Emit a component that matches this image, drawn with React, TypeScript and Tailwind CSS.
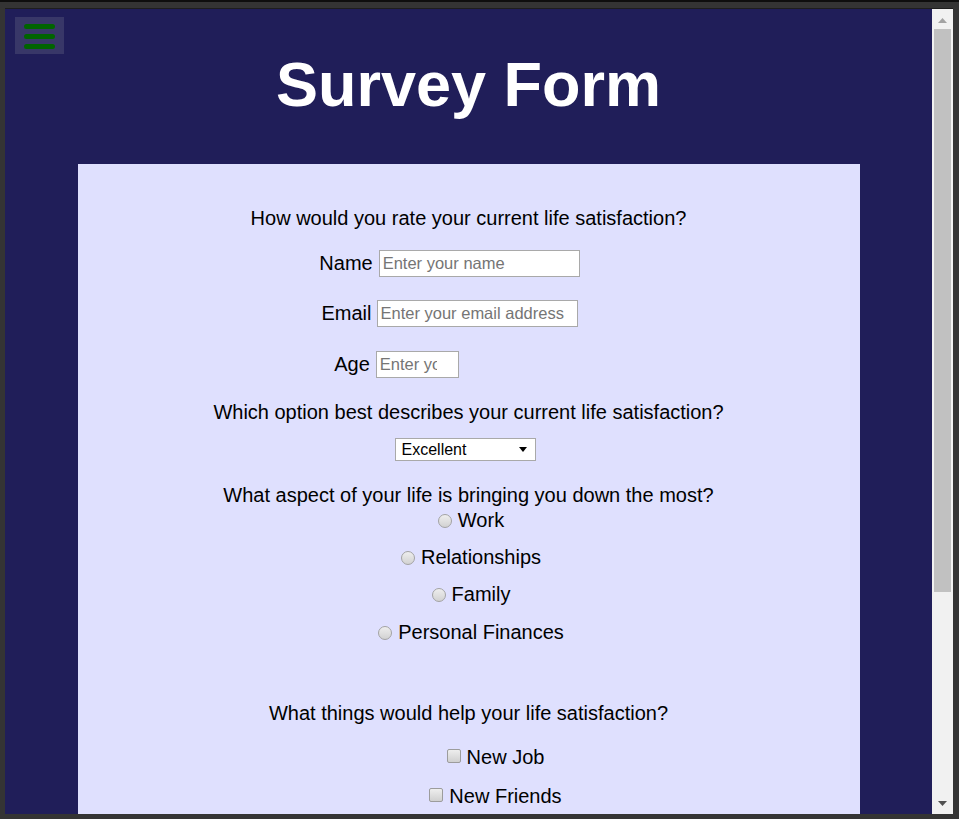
import React from "react";

const font = { fontFamily: '"Liberation Sans", Arial, sans-serif' };

function Radio({ label }: { label: string }) {
  return (
    <label className="flex items-center justify-center pl-[5px] leading-[23px] h-[23px]">
      <input
        type="radio"
        name="aspect"
        className="appearance-none w-[14px] h-[14px] rounded-full border border-[#a3a3a3] bg-linear-to-b from-[#eeeeee] to-[#d2d2d2] mr-[6px] m-0"
      />
      <span>{label}</span>
    </label>
  );
}

function Check({ label }: { label: string }) {
  return (
    <label className="flex items-center justify-center pl-[54px] leading-[23px] h-[23px]">
      <input
        type="checkbox"
        className="appearance-none w-[14px] h-[14px] rounded-[2px] border border-[#9c9c9c] bg-linear-to-b from-[#eeeeee] to-[#d0d0d0] mr-[6px] m-0 -translate-y-[2px]"
      />
      <span>{label}</span>
    </label>
  );
}

const inputCls =
  "h-[27px] border border-[#a9a9a9] bg-white px-[3px] text-[16.5px] placeholder:text-[#757575] outline-none";

export default function App() {
  return (
    <div
      className="w-[959px] h-[819px] bg-[#343434] border-t-[2px] border-[#0e0e0e] pt-[6px] pl-[5px] pr-[6px] pb-[5px] overflow-hidden"
      style={font}
    >
      <div className="flex h-full border-t border-[#1e1e1e]">
        {/* Page content */}
        <div className="relative flex-1 bg-[#201e59] overflow-hidden">
          <button className="absolute left-[10px] top-[8px] w-[49px] h-[37px] bg-[#383768] flex flex-col gap-[5px] pt-[7px] pl-[9px]">
            <span className="block w-[31px] h-[5px] rounded-full bg-[#006400]" />
            <span className="block w-[31px] h-[5px] rounded-full bg-[#006400]" />
            <span className="block w-[31px] h-[5px] rounded-full bg-[#006400]" />
          </button>

          <h1 className="mt-[44px] text-center text-white font-bold text-[63px] leading-[63px]">
            Survey Form
          </h1>

          <form className="mx-auto mt-[48px] w-[782px] bg-[#dfe0fe] pt-[43px] pb-[80px] text-black text-[20px] flex flex-col">
            <p className="text-center leading-[23px]">
              How would you rate your current life satisfaction?
            </p>

            <div className="mt-[20px] flex items-center justify-center pr-[38px] gap-[6px]">
              <label htmlFor="name" className="leading-[23px]">Name</label>
              <input
                id="name"
                type="text"
                placeholder="Enter your name"
                className={"w-[201px] " + inputCls}
              />
            </div>

            <div className="mt-[23px] flex items-center justify-center pr-[38px] gap-[5px]">
              <label htmlFor="email" className="leading-[23px]">Email</label>
              <input
                id="email"
                type="email"
                placeholder="Enter your email address"
                className={"w-[201px] " + inputCls}
              />
            </div>

            <div className="mt-[24px] flex items-center justify-center pr-[144px] gap-[6px]">
              <label htmlFor="age" className="leading-[23px]">Age</label>
              <input
                id="age"
                type="text"
                placeholder="Enter your age"
                className="w-[83px] h-[27px] border border-[#a9a9a9] bg-white pl-[3px] pr-[21px] text-[16.5px] placeholder:text-[#757575] outline-none"
              />
            </div>

            <p className="mt-[23px] text-center leading-[23px]">
              Which option best describes your current life satisfaction?
            </p>

            <div className="mt-[14px] flex justify-center pr-[7px]">
              <div className="relative w-[141px] h-[23px]">
                <select className="block appearance-none w-full h-full border border-[#a9a9a9] bg-white pl-[6px] text-[16px] leading-[21px] outline-none rounded-none">
                  <option>Excellent</option>
                  <option>Good</option>
                  <option>Average</option>
                  <option>Poor</option>
                </select>
                <svg
                  className="absolute right-[9px] top-[9px] pointer-events-none"
                  width="8"
                  height="5"
                  viewBox="0 0 8 5"
                >
                  <polygon points="0,0 8,0 4,5" fill="#000" />
                </svg>
              </div>
            </div>

            <p className="mt-[23px] text-center leading-[23px]">
              What aspect of your life is bringing you down the most?
            </p>
            <div className="mt-[2px]">
              <Radio label="Work" />
            </div>
            <div className="mt-[14px]">
              <Radio label="Relationships" />
            </div>
            <div className="mt-[14px]">
              <Radio label="Family" />
            </div>
            <div className="mt-[15px]">
              <Radio label="Personal Finances" />
            </div>

            <p className="mt-[58px] text-center leading-[23px]">
              What things would help your life satisfaction?
            </p>
            <div className="mt-[21px]">
              <Check label="New Job" />
            </div>
            <div className="mt-[16px]">
              <Check label="New Friends" />
            </div>
          </form>
        </div>

        {/* Scrollbar */}
        <div className="w-[21px] h-full bg-[#f1f1f1] flex flex-col">
          <div className="h-[20px] flex items-center justify-center pt-[2px]">
            <svg width="9" height="5" viewBox="0 0 9 5">
              <polygon points="0,5 9,5 4.5,0" fill="#a3a3a3" />
            </svg>
          </div>
          <div className="mx-[2px] h-[563px] bg-[#c1c1c1]" />
          <div className="flex-1" />
          <div className="h-[20px] flex items-center justify-center pb-[2px]">
            <svg width="9" height="5" viewBox="0 0 9 5">
              <polygon points="0,0 9,0 4.5,5" fill="#505050" />
            </svg>
          </div>
        </div>
      </div>
    </div>
  );
}
